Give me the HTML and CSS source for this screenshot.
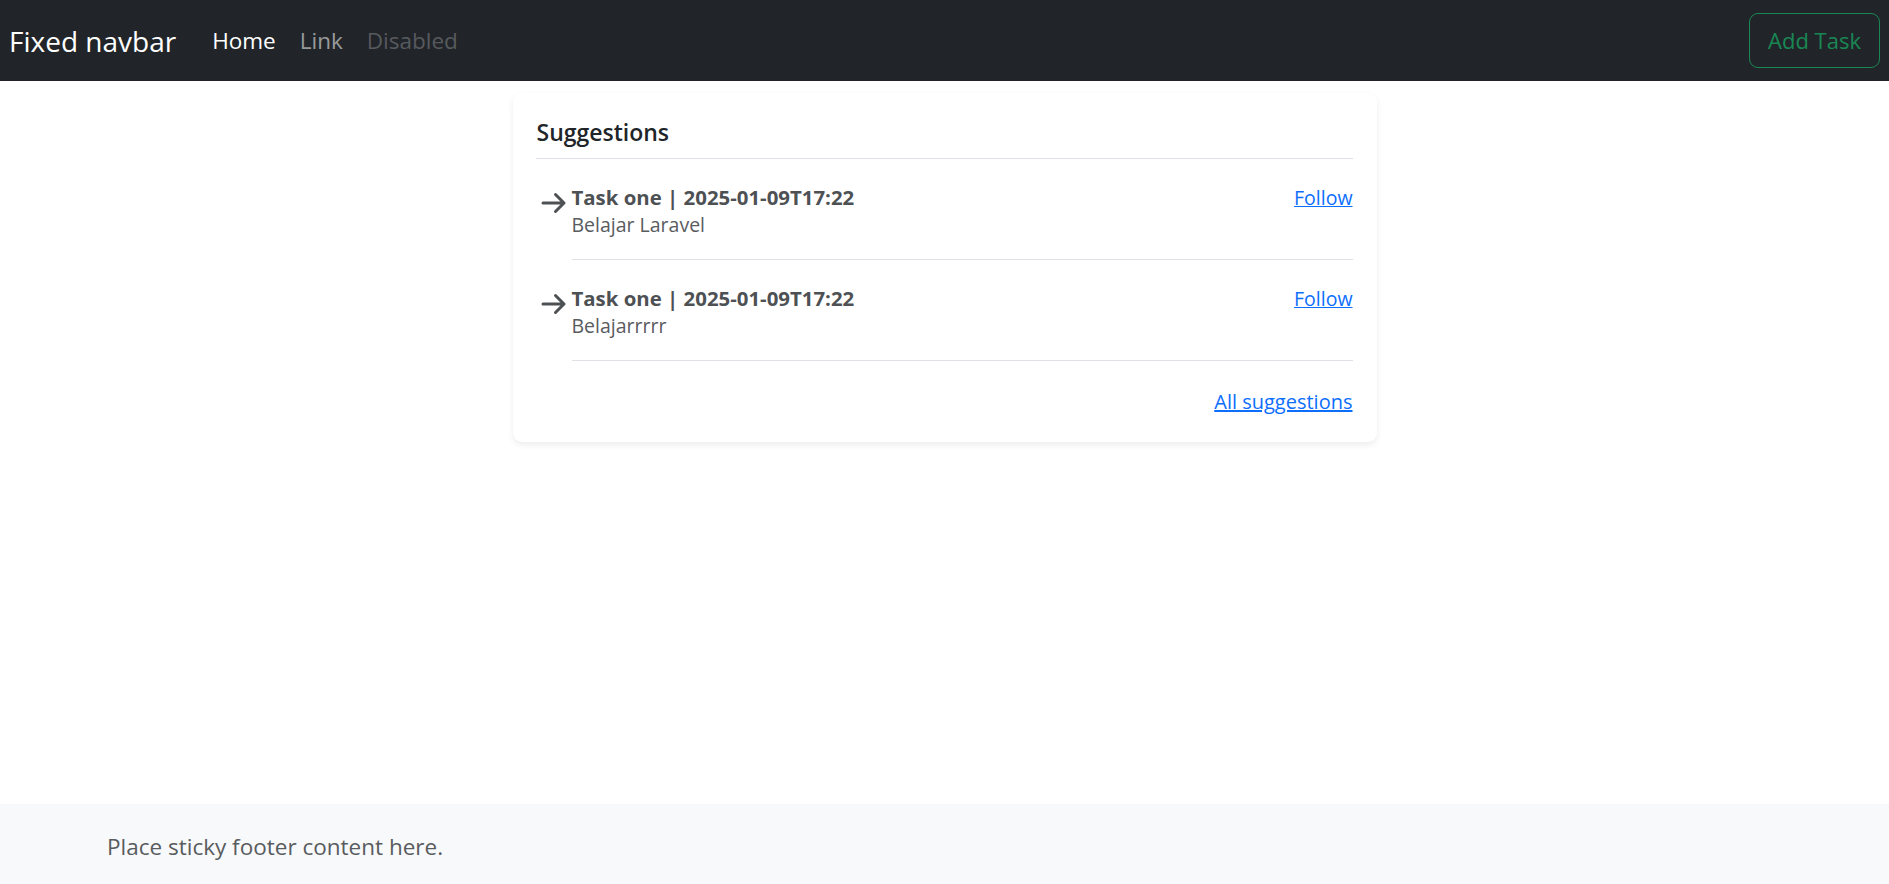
FILE: index.html
```
<!DOCTYPE html>
<html lang="en">
<head>
<meta charset="utf-8">
<title>Fixed navbar</title>
<link rel="stylesheet" href="styles.css">
</head>
<body>
<nav class="navbar">
  <a class="brand" href="#">Fixed navbar</a>
  <ul class="nav">
    <li><a class="nav-link active" href="#">Home</a></li>
    <li><a class="nav-link" href="#">Link</a></li>
    <li><a class="nav-link disabled" href="#">Disabled</a></li>
  </ul>
  <button class="btn-add" type="button">Add Task</button>
</nav>
<main class="main">
  <div class="card">
    <h6 class="card-title">Suggestions</h6>
    <div class="item">
      <svg class="arrow" width="36" height="32" viewBox="0 0 36 32"><path d="M7 19H28M19.5 10.5L28 19L19.5 27.5" fill="none" stroke="currentColor" stroke-width="3" stroke-linecap="round" stroke-linejoin="round"/></svg>
      <div class="item-body">
        <div class="item-head"><strong class="item-title">Task one | 2025-01-09T17:22</strong><a class="link" href="#">Follow</a></div>
        <span class="item-desc">Belajar Laravel</span>
      </div>
    </div>
    <div class="item">
      <svg class="arrow" width="36" height="32" viewBox="0 0 36 32"><path d="M7 19H28M19.5 10.5L28 19L19.5 27.5" fill="none" stroke="currentColor" stroke-width="3" stroke-linecap="round" stroke-linejoin="round"/></svg>
      <div class="item-body">
        <div class="item-head"><strong class="item-title">Task one | 2025-01-09T17:22</strong><a class="link" href="#">Follow</a></div>
        <span class="item-desc">Belajarrrrr</span>
      </div>
    </div>
    <small class="all"><a class="link" href="#">All suggestions</a></small>
  </div>
</main>
<footer class="footer">
  <span class="footer-text">Place sticky footer content here.</span>
</footer>
</body>
</html>
```
FILE: styles.css
```
* { box-sizing: border-box; }
html, body { margin: 0; padding: 0; }
body {
  font-family: "Open Sans", "Noto Sans", sans-serif;
  font-size: 22.5px;
  line-height: 1.5;
  color: #212529;
  background: #fff;
  min-height: 100vh;
  display: flex;
  flex-direction: column;
}
.navbar {
  height: 81px;
  background: #212529;
  display: flex;
  align-items: center;
  padding: 0 9px 0 9px;
}
.brand {
  font-size: 28px;
  color: #fff;
  text-decoration: none;
  margin-right: 24px;
  line-height: 1.5;
}
.nav {
  list-style: none;
  margin: 0;
  padding: 0;
  display: flex;
  flex: 1;
}
.nav-link {
  display: block;
  padding: 0 12px;
  font-size: 22.5px;
  color: rgba(255,255,255,0.55);
  text-decoration: none;
}
.nav-link.active { color: #fff; }
.nav-link.disabled { color: rgba(255,255,255,0.25); }
.btn-add {
  font-family: inherit;
  font-size: 22px;
  line-height: 33px;
  height: 55px;
  padding: 0 18px;
  color: #198754;
  background: transparent;
  border: 1.5px solid #198754;
  border-radius: 9px;
}
.main {
  flex: 1;
  display: flex;
  justify-content: center;
  align-items: flex-start;
  padding-top: 12px;
}
.card {
  width: 864px;
  background: #fff;
  border-radius: 9px;
  box-shadow: 0 3px 6px rgba(0,0,0,0.075);
  padding: 23px 24px 24px 23px;
}
.card-title {
  margin: 0;
  font-size: 23px;
  font-weight: 600;
  line-height: 28px;
  padding: 2px 0 12px 1px;
  border-bottom: 1px solid #dee2e6;
  color: #212529;
}
.item {
  display: flex;
  padding-top: 25px;
  color: #595c5f;
}
.arrow {
  flex-shrink: 0;
  color: #4d5154;
}
.item-body {
  flex: 1;
  padding-bottom: 21px;
  border-bottom: 1px solid #dee2e6;
  font-size: 19.5px;
  line-height: 27px;
}
.item-head {
  display: flex;
  justify-content: space-between;
}
.item-title { font-weight: 700; color: #4d5154; font-size: 20.4px; }
.item-desc { display: block; }
.link { color: #0d6efd; text-decoration: underline; }
.all {
  display: block;
  text-align: right;
  margin-top: 25px;
  font-size: 20px;
  line-height: 32px;
}
.footer {
  height: 80px;
  background: #f8f9fa;
  display: flex;
  align-items: center;
  padding: 5px 0 0 107px;
}
.footer-text {
  font-size: 22.5px;
  color: #595c5f;
}
```
